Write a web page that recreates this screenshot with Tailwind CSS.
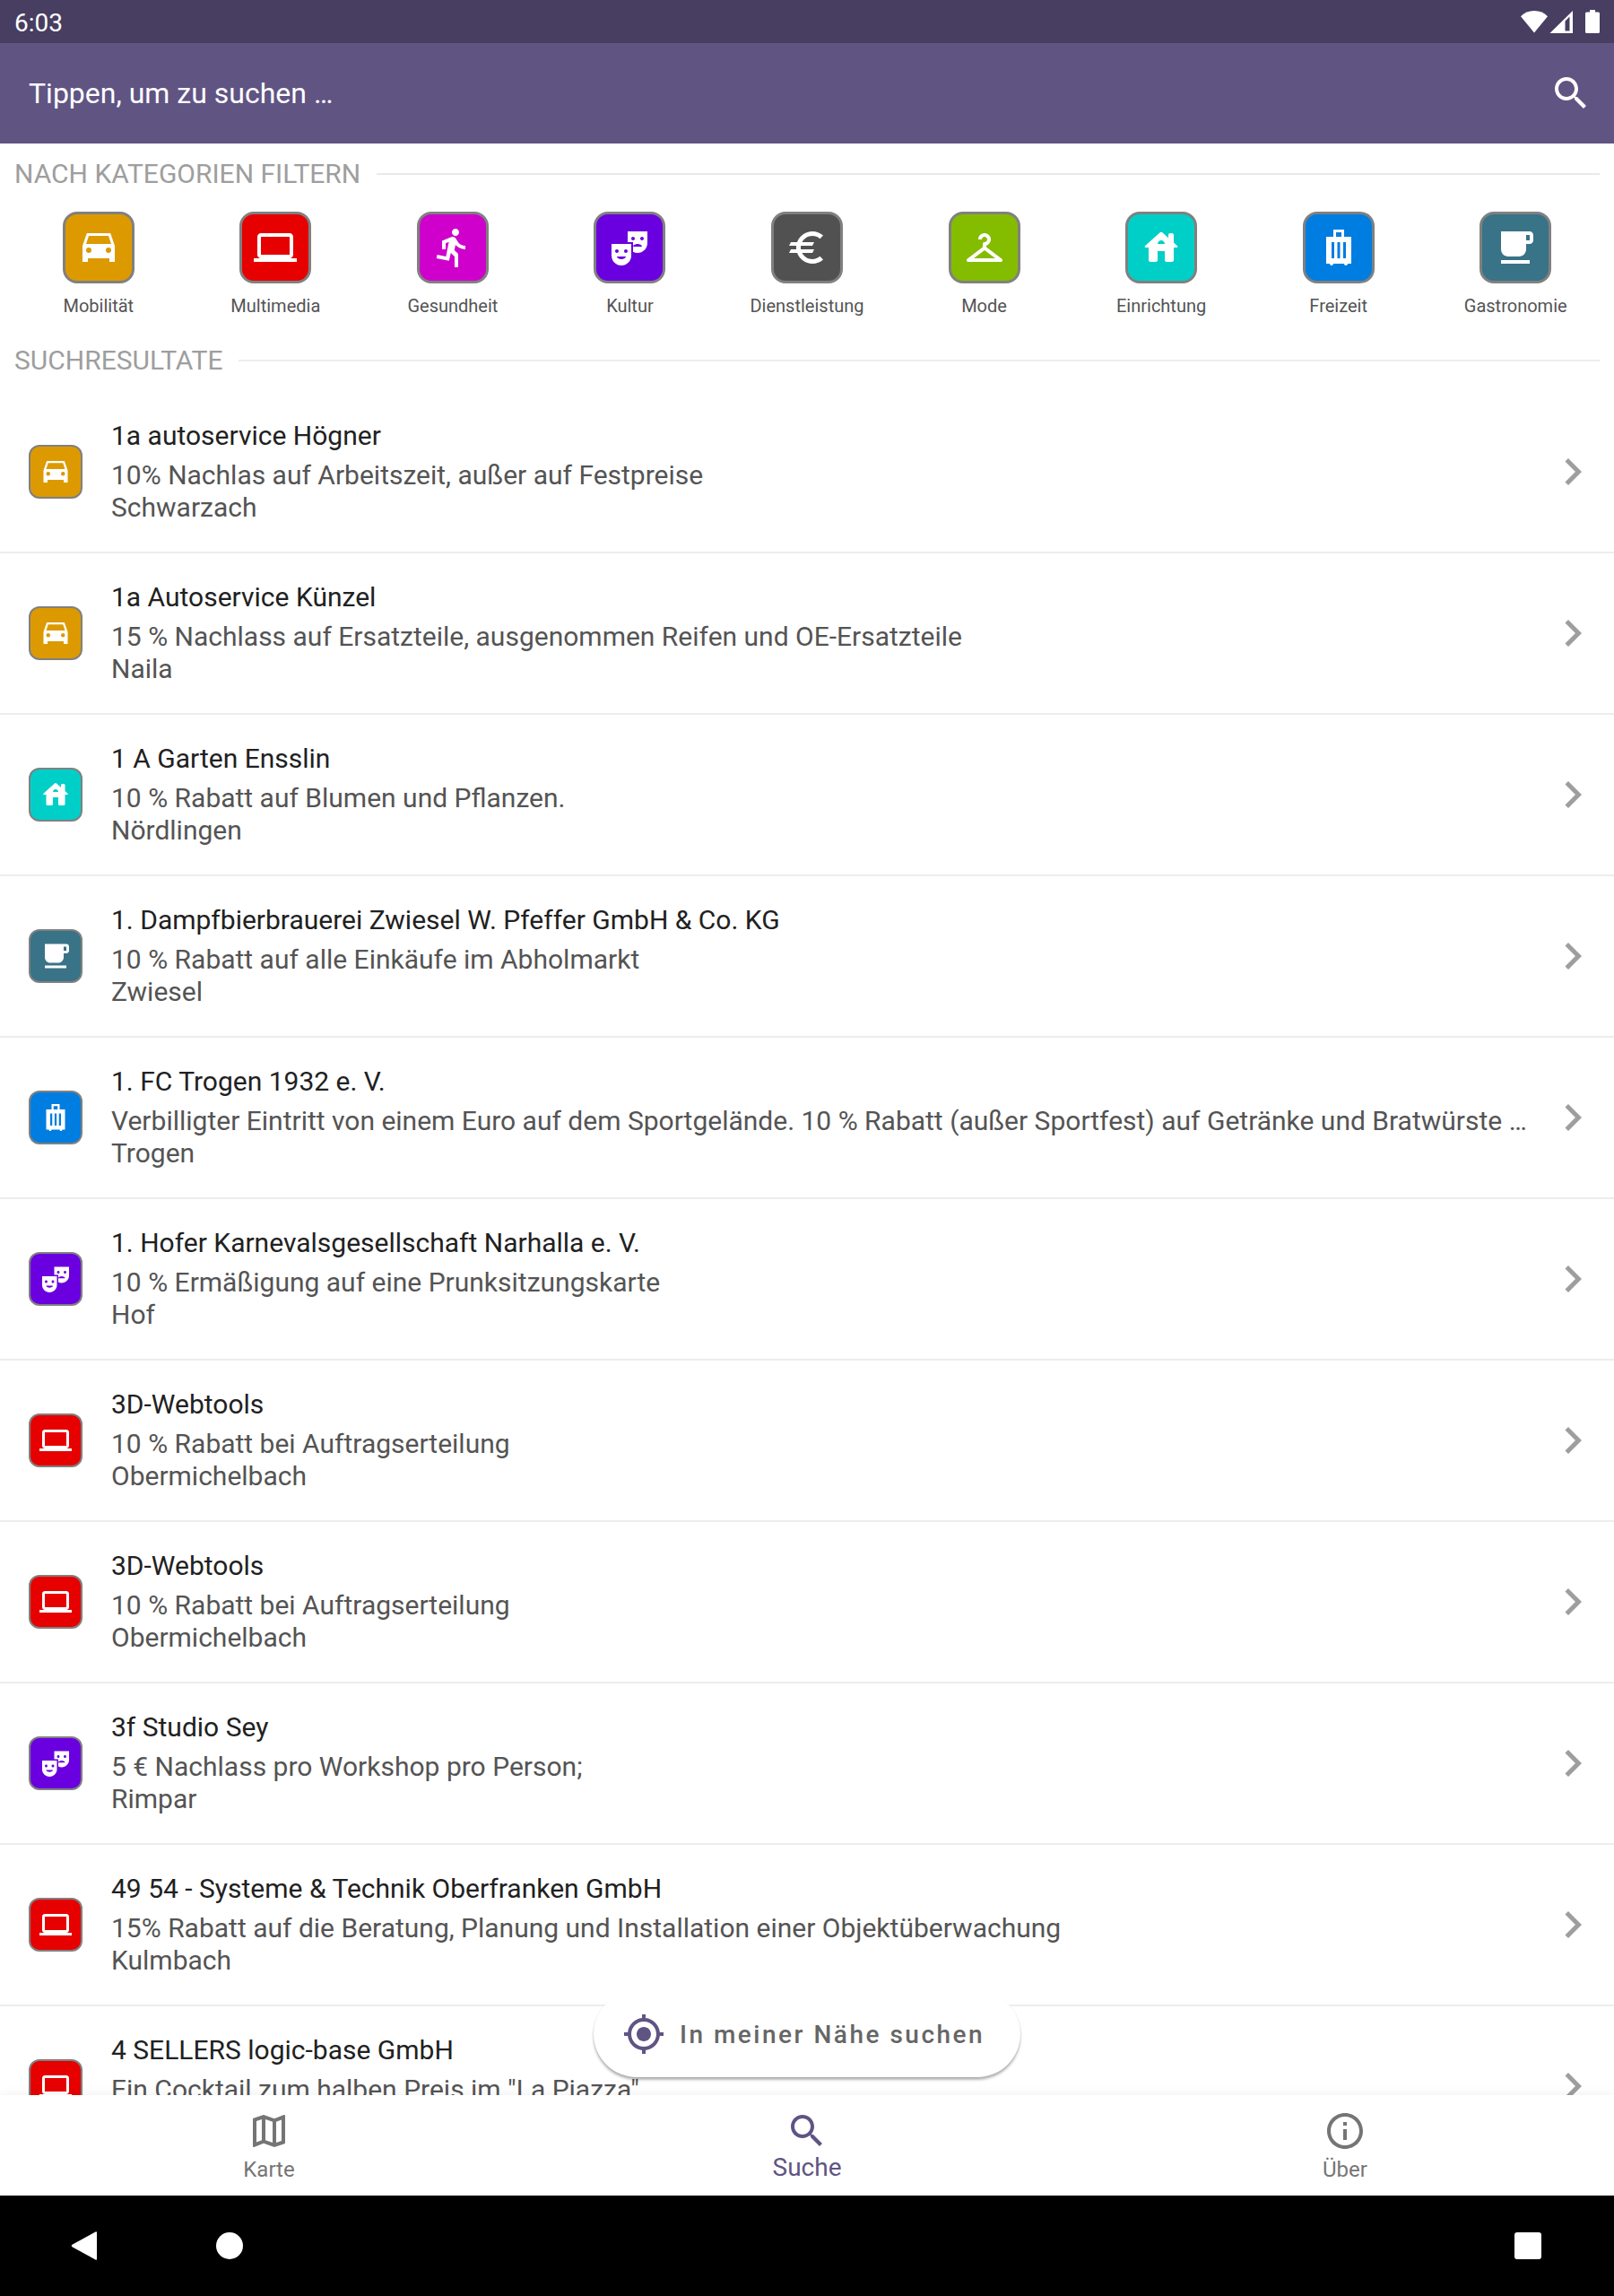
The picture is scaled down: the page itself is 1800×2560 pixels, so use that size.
<!DOCTYPE html>
<html lang="de">
<head>
<meta charset="utf-8">
<title>Suche</title>
<script src="https://cdn.jsdelivr.net/npm/@tailwindcss/browser@4"></script>
</head>
<body class="bg-white font-[Roboto,sans-serif] antialiased">
<svg class="hidden">
  <symbol id="car" viewBox="0 0 24 24"><path fill-rule="evenodd" d="M18.58 4H5.43L3 11v9h3v-2h12v2h3v-9zM6.5 15a1.5 1.5 0 1 1 0-3 1.5 1.5 0 0 1 0 3zm11 0a1.5 1.5 0 1 1 0-3 1.5 1.5 0 0 1 0 3zM5 10l1.5-4.5h11L19 10z"/></symbol>
  <symbol id="laptop" viewBox="0 0 24 24"><path d="M20 18c1.1 0 1.99-.9 1.99-2L22 6c0-1.1-.9-2-2-2H4c-1.1 0-2 .9-2 2v10c0 1.1.9 2 2 2H0v2h24v-2h-4zM4 6h16v10H4V6z"/></symbol>
  <symbol id="run" viewBox="0 0 24 24"><path d="M13.49 5.48c1.1 0 2-.9 2-2s-.9-2-2-2-2 .9-2 2 .9 2 2 2zm-3.6 13.9l1-4.4 2.1 2v6h2v-7.5l-2.1-2 .6-3c1.3 1.5 3.3 2.5 5.5 2.5v-2c-1.9 0-3.5-1-4.3-2.4l-1-1.6c-.4-.6-1-1-1.7-1-.3 0-.5.1-.8.1l-5.2 2.2v4.7h2v-3.4l1.8-.7-1.6 8.1-4.9-1-.4 2 7 1.4z"/></symbol>
  <symbol id="masks" viewBox="0 0 24 24"><path fill-rule="evenodd" d="M2 16.5C2 19.54 4.46 22 7.5 22s5.5-2.46 5.5-5.5V10H2v6.5zm5.5 2C6.12 18.5 5 17.83 5 17h5c0 .83-1.12 1.5-2.5 1.5zM10 13c.55 0 1 .45 1 1s-.45 1-1 1-1-.45-1-1 .45-1 1-1zm-5 0c.55 0 1 .45 1 1s-.45 1-1 1-1-.45-1-1 .45-1 1-1z"/><path fill-rule="evenodd" d="M11 3v6h3v2.5c0-.83 1.12-1.5 2.5-1.5s2.5.67 2.5 1.5h-5v2.89c.75.38 1.6.61 2.5.61 3.04 0 5.5-2.46 5.5-5.5V3H11zm3 5c-.55 0-1-.45-1-1s.45-1 1-1 1 .45 1 1-.45 1-1 1zm5 0c-.55 0-1-.45-1-1s.45-1 1-1 1 .45 1 1-.45 1-1 1z"/></symbol>
  <symbol id="euro" viewBox="0 0 24 24"><path d="M15 18.5c-2.51 0-4.68-1.42-5.76-3.5H15l1-2H8.58c-.05-.33-.08-.66-.08-1s.03-.67.08-1H15l1-2H9.24C10.32 6.92 12.5 5.5 15 5.5c1.61 0 3.09.59 4.23 1.57L21 5.3C19.41 3.87 17.3 3 15 3c-3.92 0-7.24 2.51-8.48 6H3l-1 2h4.06c-.04.33-.06.66-.06 1s.02.67.06 1H3l-1 2h4.52c1.24 3.49 4.56 6 8.48 6 2.31 0 4.41-.87 6-2.3l-1.78-1.77c-1.13.98-2.6 1.57-4.22 1.57z"/></symbol>
  <symbol id="hanger" viewBox="0 0 24 24"><path d="M21.6 18.2L13 11.75v-.91c1.65-.49 2.8-2.17 2.43-4.05-.26-1.31-1.3-2.4-2.61-2.7C10.54 3.57 8.5 5.3 8.5 7.5h2c0-.83.67-1.5 1.5-1.5s1.5.67 1.5 1.5c0 .84-.69 1.52-1.53 1.5-.54-.01-.97.45-.97.99v1.76L2.4 18.2c-.77.58-.36 1.8.6 1.8h18c.96 0 1.37-1.22.6-1.8zM6 18l6-4.5 6 4.5H6z"/></symbol>
  <symbol id="house" viewBox="0 0 24 24"><path fill-rule="evenodd" d="M19 9.3V5c0-.55-.45-1-1-1h-1c-.55 0-1 .45-1 1v1.6l-3.33-3c-.38-.34-.96-.34-1.34 0l-8.36 7.53c-.34.3-.13.87.33.87H5v7c0 .55.45 1 1 1h3c.55 0 1-.45 1-1v-5h4v5c0 .55.45 1 1 1h3c.55 0 1-.45 1-1v-7h1.7c.46 0 .68-.57.33-.87L19 9.3zm-9 .7c0-1.1.9-2 2-2s2 .9 2 2h-4z"/></symbol>
  <symbol id="luggage" viewBox="0 0 24 24"><path fill-rule="evenodd" d="M9 2v4H5v15h2c0 .55.45 1 1 1s1-.45 1-1h6c0 .55.45 1 1 1s1-.45 1-1h2V6h-4V2H9zm1.5 1.5h3V6h-3V3.5zM9.5 18H8V9h1.5v9zm3.25 0h-1.5V9h1.5v9zm3.25 0h-1.5V9H16v9z"/></symbol>
  <symbol id="cup" viewBox="0 0 24 24"><path fill-rule="evenodd" d="M20 3H4v10c0 2.21 1.79 4 4 4h6c2.21 0 4-1.79 4-4v-3h2c1.11 0 2-.9 2-2V5c0-1.11-.89-2-2-2zm0 5h-2V5h2v3zM4 19h16v2H4z"/></symbol>
  <symbol id="search" viewBox="0 0 24 24"><path d="M15.5 14h-.79l-.28-.27C15.41 12.59 16 11.11 16 9.5 16 5.91 13.09 3 9.5 3S3 5.91 3 9.5 5.91 16 9.5 16c1.61 0 3.09-.59 4.23-1.57l.27.28v.79l5 4.99L20.49 19l-4.99-5zm-6 0C7.01 14 5 11.99 5 9.5S7.01 5 9.5 5 14 7.01 14 9.5 11.99 14 9.5 14z"/></symbol>
  <symbol id="chevron" viewBox="0 0 24 24"><path d="M10 6L8.59 7.41 13.17 12l-4.58 4.59L10 18l6-6z"/></symbol>
</svg>

<div class="relative flex h-[2560px] w-[1800px] flex-col overflow-hidden">
  <!-- Statusleiste -->
  <div class="flex h-12 shrink-0 items-center justify-between bg-[#473e61] px-4 text-white">
    <span class="pt-1 text-[28px] leading-8">6:03</span>
    <div class="flex items-start gap-[2px]">
      <svg class="h-[26px] w-[30px]" viewBox="0 0 30 26" fill="currentColor"><path d="M15 25.5 0 7.2C4 3.200 9 1 15 1s11 2.200 15 6.200z"/></svg>
      <svg class="h-[26px] w-[26px]" viewBox="0 0 26 26" fill="currentColor"><path fill-rule="evenodd" d="M.5 26 26 1v25zM17.500 12.500V23.500h5V7.500z"/></svg>
      <svg class="ml-[12px] h-[26px] w-4" viewBox="0 0 16 26" fill="currentColor"><path d="M5 0h6v2.500h3.500q1.500 0 1.500 1.500v20.500q0 1.500-1.500 1.500h-13q-1.500 0-1.500-1.500V4q0-1.500 1.500-1.500H5z"/></svg>
    </div>
  </div>

  <!-- Suchleiste -->
  <header class="flex h-28 shrink-0 items-center justify-between bg-[#605483] pr-6 pl-8 text-white">
    <span class="text-[32px] leading-10">Tippen, um zu suchen …</span>
    <svg class="size-12" fill="currentColor"><use href="#search"/></svg>
  </header>

  <main class="flex min-h-0 flex-1 flex-col overflow-hidden">
    <div class="mt-4 flex shrink-0 items-center gap-[18px] px-4">
      <h2 class="text-3xl leading-9 text-[#9e9e9e]">NACH KATEGORIEN FILTERN</h2>
      <div class="h-[2px] flex-1 bg-[#e9e9e9]"></div>
    </div>
    <div id="categories" class="mt-6 grid shrink-0 grid-cols-9 px-[11px]"></div>
    <div class="mt-[31px] flex shrink-0 items-center gap-[17px] px-4">
      <h2 class="text-3xl leading-9 text-[#9e9e9e]">SUCHRESULTATE</h2>
      <div class="h-[2px] flex-1 bg-[#ededed]"></div>
    </div>
    <ul id="results" class="mt-[17px]"></ul>
  </main>

  <!-- Schwebender Button über der Liste -->
  <button class="absolute top-[2220px] left-[662px] flex h-24 w-[476px] items-center gap-4 rounded-full bg-white pl-8 shadow-[0_3px_3px_rgba(0,0,0,0.28),0_1px_2px_rgba(0,0,0,0.08)]">
    <svg class="size-12 text-[#605483]" viewBox="0 0 24 24" fill="currentColor"><path d="M12 8c-2.210 0-4 1.790-4 4s1.790 4 4 4 4-1.790 4-4-1.790-4-4-4zm8.940 3c-.46-4.170-3.770-7.480-7.940-7.940V1h-2v2.060C6.830 3.520 3.520 6.830 3.060 11H1v2h2.060c.46 4.170 3.770 7.480 7.940 7.940V23h2v-2.060c4.170-.46 7.480-3.770 7.940-7.940H23v-2h-2.060zM12 19c-3.870 0-7-3.130-7-7s3.130-7 7-7 7 3.130 7 7-3.130 7-7 7z"/></svg>
    <span class="pt-[2px] text-[28px] leading-8 font-medium tracking-[2.5px] whitespace-nowrap text-[#666666]">In meiner Nähe suchen</span>
  </button>

  <!-- Untere Navigation -->
  <nav class="relative grid h-28 shrink-0 grid-cols-3 bg-white shadow-[0_0_12px_rgba(0,0,0,0.07)]">
    <div class="flex flex-col items-center pt-4 text-[#757575]">
      <svg class="size-12" viewBox="0 0 24 24" fill="currentColor"><path d="M20.500 3l-.16.03L15 5.100 9 3 3.360 4.900c-.21.07-.36.25-.36.48V20.500c0 .28.22.5.5.5l.16-.03L9 18.900l6 2.100 5.640-1.900c.21-.07.36-.25.36-.48V3.500c0-.28-.22-.5-.5-.5zM10 5.470l4 1.400v11.660l-4-1.400V5.470zm-5 .99l3-1.010v11.700l-3 1.160V6.460zm14 11.080l-3 1.010V6.860l3-1.160v11.840z"/></svg>
      <span class="mt-[5px] text-2xl leading-7">Karte</span>
    </div>
    <div class="flex flex-col items-center pt-4 text-[#605483]">
      <svg class="size-12" fill="currentColor"><use href="#search"/></svg>
      <span class="mt-px text-[28px] leading-8">Suche</span>
    </div>
    <div class="flex flex-col items-center pt-4 text-[#757575]">
      <svg class="size-12" viewBox="0 0 24 24" fill="currentColor"><path d="M11 7h2v2h-2zm0 4h2v6h-2zm1-9C6.480 2 2 6.480 2 12s4.480 10 10 10 10-4.480 10-10S17.520 2 12 2zm0 18c-4.410 0-8-3.590-8-8s3.590-8 8-8 8 3.590 8 8-3.590 8-8 8z"/></svg>
      <span class="mt-[5px] text-2xl leading-7">Über</span>
    </div>
  </nav>

  <!-- Systemnavigation -->
  <div class="relative flex h-28 shrink-0 items-center bg-black pr-[81px] pl-[79px]">
    <svg class="h-8 w-[30px]" viewBox="0 0 30 32" fill="#fff"><path d="M27.500.4q1.500-.8 1.500.9v29.400q0 1.700-1.500.9L1.500 17.200q-1.500-1.200 0-2.400z"/></svg>
    <div class="ml-[132px] size-[30px] rounded-full bg-white"></div>
    <div class="ml-auto size-[30px] rounded-[3px] bg-white"></div>
  </div>
</div>

<script>
const categories = [
  ["Mobilität", "car", "bg-[#dc9a00]"],
  ["Multimedia", "laptop", "bg-[#e60000]"],
  ["Gesundheit", "run", "bg-[#d000cc]"],
  ["Kultur", "masks", "bg-[#6a00df]"],
  ["Dienstleistung", "euro", "bg-[#515151]"],
  ["Mode", "hanger", "bg-[#84bc00]"],
  ["Einrichtung", "house", "bg-[#00cfc8]"],
  ["Freizeit", "luggage", "bg-[#007de0]"],
  ["Gastronomie", "cup", "bg-[#387387]"],
];
const results = [
  [0, "1a autoservice Högner", "10% Nachlas auf Arbeitszeit, außer auf Festpreise", "Schwarzach"],
  [0, "1a Autoservice Künzel", "15 % Nachlass auf Ersatzteile, ausgenommen Reifen und OE-Ersatzteile", "Naila"],
  [6, "1 A Garten Ensslin", "10 % Rabatt auf Blumen und Pflanzen.", "Nördlingen"],
  [8, "1. Dampfbierbrauerei Zwiesel W. Pfeffer GmbH &amp; Co. KG", "10 % Rabatt auf alle Einkäufe im Abholmarkt", "Zwiesel"],
  [7, "1. FC Trogen 1932 e. V.", "Verbilligter Eintritt von einem Euro auf dem Sportgelände. 10 % Rabatt (außer Sportfest) auf Getränke und Bratwürste …", "Trogen"],
  [3, "1. Hofer Karnevalsgesellschaft Narhalla e. V.", "10 % Ermäßigung auf eine Prunksitzungskarte", "Hof"],
  [1, "3D-Webtools", "10 % Rabatt bei Auftragserteilung", "Obermichelbach"],
  [1, "3D-Webtools", "10 % Rabatt bei Auftragserteilung", "Obermichelbach"],
  [3, "3f Studio Sey", "5 € Nachlass pro Workshop pro Person;", "Rimpar"],
  [1, "49 54 - Systeme &amp; Technik Oberfranken GmbH", "15% Rabatt auf die Beratung, Planung und Installation einer Objektüberwachung", "Kulmbach"],
  [1, "4 SELLERS logic-base GmbH", "Ein Cocktail zum halben Preis im \"La Piazza\"", ""],
];
document.getElementById("categories").innerHTML = categories.map(([label, icon, bg]) => `
  <div class="flex flex-col items-center">
    <div class="flex size-20 items-center justify-center rounded-2xl border-3 border-[#808080] ${bg}">
      <svg class="size-12 fill-white"><use href="#${icon}"/></svg>
    </div>
    <span class="mt-[13px] text-xl leading-6 text-[#545454]">${label}</span>
  </div>`).join("");
document.getElementById("results").innerHTML = results.map(([cat, name, offer, city]) => `
  <li class="flex h-[180px] items-center border-b-2 border-[#ededed] pr-4 pl-8">
    <div class="flex size-15 shrink-0 items-center justify-center rounded-xl border-2 border-[#808080] ${categories[cat][2]}">
      <svg class="size-9 fill-white"><use href="#${categories[cat][1]}"/></svg>
    </div>
    <div class="ml-8 min-w-0 flex-1 text-3xl leading-9 whitespace-nowrap text-[#545454]">
      <p class="mb-2 leading-9 text-[#212121]">${name}</p>
      <p class="leading-9">${offer}</p>
      <p class="h-9 leading-9">${city}</p>
    </div>
    <svg class="size-15 shrink-0 fill-[#9e9e9e]"><use href="#chevron"/></svg>
  </li>`).join("");
</script>
</body>
</html>
